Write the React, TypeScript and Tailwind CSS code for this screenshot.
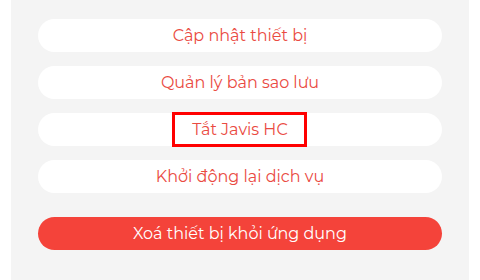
import React from "react";

const font = { fontFamily: '"Montserrat", "Noto Sans", "Open Sans", sans-serif' };

function Btn({ label, children }: { label: string; children?: React.ReactNode }) {
  return (
    <div className="relative h-[33px] w-full rounded-full bg-white flex items-center justify-center text-[16px] text-[#ea4a42]">
      <span className="leading-none">{label}</span>
      {children}
    </div>
  );
}

export default function App() {
  return (
    <div className="w-[480px] h-[280px] bg-white flex" style={font}>
      <div className="ml-[11px] w-[458px] h-full bg-[#f4f4f4] pt-[19px] px-[27px] flex flex-col">
        <div className="flex flex-col gap-[14px]">
          <Btn label="Cập nhật thiết bị" />
          <Btn label="Quản lý bản sao lưu" />
          <Btn label="Tắt Javis HC">
            <div className="absolute left-[134px] top-[-1px] w-[135px] h-[35px] border-[3px] border-[#ff0000]" />
          </Btn>
          <Btn label="Khởi động lại dịch vụ" />
        </div>
        <div className="mt-[24px] h-[33px] w-full rounded-full bg-[#f4433a] flex items-center justify-center text-[16px] text-white">
          <span className="leading-none">Xoá thiết bị khỏi ứng dụng</span>
        </div>
      </div>
    </div>
  );
}
